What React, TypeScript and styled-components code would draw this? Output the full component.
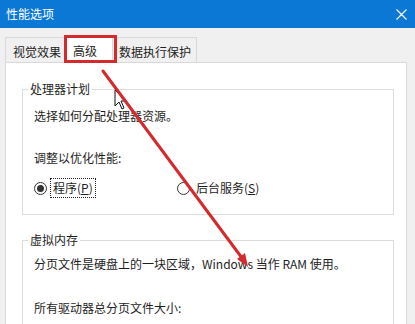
import React from 'react';
import styled, { createGlobalStyle } from 'styled-components';

const Global = createGlobalStyle`
  html, body { margin: 0; padding: 0; background: #f0f0f0; }
  body { font-family: "Noto Sans CJK SC", "Noto Sans", sans-serif; }
`;

const Window = styled.div`
  position: relative;
  width: 415px;
  height: 324px;
  overflow: hidden;
  background: #f0f0f0;
  display: flex;
  flex-direction: column;
  font-family: "Noto Sans CJK SC", "Noto Sans", sans-serif;
  font-size: 12px;
  line-height: 16px;
  color: #1e1e1e;
`;

const TitleBar = styled.div`
  flex: none;
  height: 28px;
  background: #0b78d5;
  display: flex;
  align-items: center;
  justify-content: space-between;
  padding: 0 8px 0 6px;
  color: #ffffff;
`;

const Title = styled.span`
  font-size: 12px;
  line-height: 16px;
`;

const Body = styled.div`
  flex: 1;
  display: flex;
  flex-direction: column;
  padding: 7px 8px 0 5px;
`;

const TabList = styled.div`
  display: flex;
  align-items: flex-end;
  height: 27px;
  position: relative;
  z-index: 1;
`;

const Tab = styled.div<{ $active?: boolean }>`
  box-sizing: border-box;
  height: ${p => (p.$active ? '28px' : '25px')};
  margin: ${p => (p.$active ? '0 -2px -1px -2px' : '0')};
  padding: ${p => (p.$active ? '2px 15px 0 7px' : '3px 5px 0 7px')};
  display: flex;
  align-items: center;
  background: ${p => (p.$active ? '#ffffff' : '#f0f0f0')};
  border: 1px solid #d9d9d9;
  border-bottom: none;
  position: relative;
  z-index: ${p => (p.$active ? 2 : 0)};
  white-space: nowrap;
`;

const Panel = styled.div`
  flex: 1;
  background: #ffffff;
  border: 1px solid #d9d9d9;
  padding: 18px 12px 0 16px;
  display: flex;
  flex-direction: column;
`;

const Group = styled.fieldset<{ $top?: number }>`
  margin: ${p => p.$top ?? 0}px 0 0 0;
  padding: 0 11px 16px 11px;
  border: 1px solid #dcdcdc;
  min-width: 0;
`;

const Legend = styled.legend`
  margin-left: -6px;
  padding: 0 2px;
  font-size: 12px;
  line-height: 16px;
`;

const Line = styled.p<{ $gap: number }>`
  margin: ${p => p.$gap}px 0 0 0;
  font-size: 12px;
  line-height: 16px;
  white-space: nowrap;
`;

const RadioRow = styled.div`
  margin-top: 12px;
  display: grid;
  grid-template-columns: 143px auto;
  align-items: center;
  height: 20px;
`;

const RadioItem = styled.label`
  display: flex;
  align-items: center;
  gap: 3px;
`;

const RadioCircle = styled.span<{ $checked?: boolean }>`
  box-sizing: border-box;
  width: 13px;
  height: 13px;
  border-radius: 50%;
  border: 1px solid #333333;
  background: #ffffff;
  display: flex;
  align-items: center;
  justify-content: center;
  &::after {
    content: '';
    width: 7px;
    height: 7px;
    border-radius: 50%;
    background: #333333;
    display: ${p => (p.$checked ? 'block' : 'none')};
  }
`;

const RadioLabel = styled.span<{ $focused?: boolean }>`
  box-sizing: border-box;
  height: 20px;
  line-height: 18px;
  padding: 0 2px;
  border: 1px ${p => (p.$focused ? 'dotted #222' : 'solid transparent')};
`;

const Highlight = styled.div`
  position: absolute;
  left: 64px;
  top: 35px;
  width: 53px;
  height: 28px;
  box-sizing: border-box;
  border: 3px solid #d42a2d;
  z-index: 5;
  pointer-events: none;
`;

const Overlay = styled.svg`
  position: absolute;
  left: 0;
  top: 0;
  width: 415px;
  height: 324px;
  z-index: 6;
  pointer-events: none;
`;

export default function App() {
  return (
    <>
      <Global />
      <Window>
        <TitleBar>
          <Title>性能选项</Title>
          <svg width="11" height="11" viewBox="0 0 11 11">
            <path d="M0.5 0.5 L10.5 10.5 M10.5 0.5 L0.5 10.5" stroke="#ffffff" strokeWidth="1.1" />
          </svg>
        </TitleBar>
        <Body>
          <TabList>
            <Tab>视觉效果</Tab>
            <Tab $active>高级</Tab>
            <Tab>数据执行保护</Tab>
          </TabList>
          <Panel>
            <Group>
              <Legend>处理器计划</Legend>
              <Line $gap={11}>选择如何分配处理器资源。</Line>
              <Line $gap={26}>调整以优化性能:</Line>
              <RadioRow>
                <RadioItem>
                  <RadioCircle $checked />
                  <RadioLabel $focused>
                    程序(<u>P</u>)
                  </RadioLabel>
                </RadioItem>
                <RadioItem>
                  <RadioCircle />
                  <RadioLabel>
                    后台服务(<u>S</u>)
                  </RadioLabel>
                </RadioItem>
              </RadioRow>
            </Group>
            <Group $top={17}>
              <Legend>虚拟内存</Legend>
              <Line $gap={8}>分页文件是硬盘上的一块区域，Windows 当作 RAM 使用。</Line>
              <Line $gap={28}>所有驱动器总分页文件大小:</Line>
            </Group>
          </Panel>
        </Body>
        <Highlight />
        <Overlay viewBox="0 0 415 324">
          <path
            d="M115 90 L115 106 L119 102 L122 109 L124 108 L121 101 L126 101 Z"
            fill="#ffffff"
            stroke="#111111"
            strokeWidth="1"
            strokeLinejoin="round"
          />
          <line x1="103" y1="71" x2="242" y2="258" stroke="#d42a2d" strokeWidth="3" strokeLinecap="round" />
          <polygon points="248,267 245,253 237,259" fill="#d42a2d" />
        </Overlay>
      </Window>
    </>
  );
}
